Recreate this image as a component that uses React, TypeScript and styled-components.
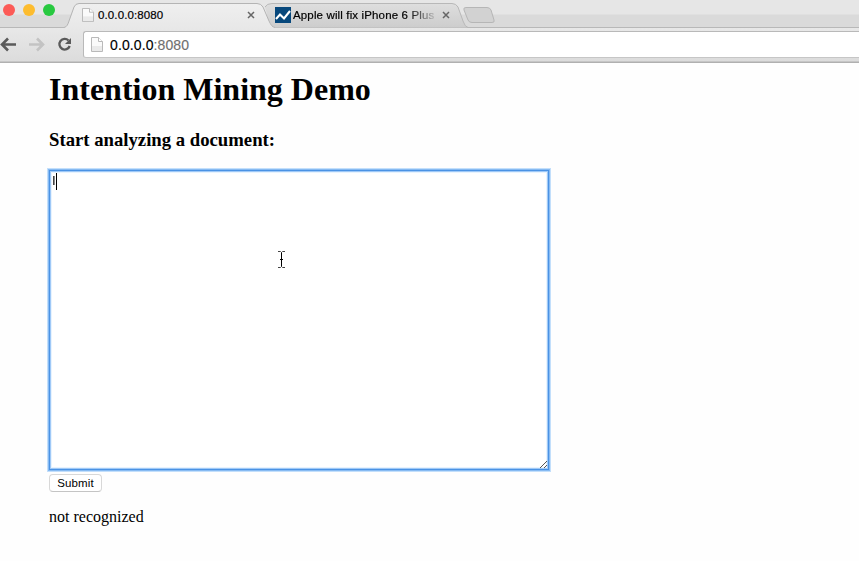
import React from "react";
import styled, { createGlobalStyle } from "styled-components";

const GlobalStyle = createGlobalStyle`
  * { box-sizing: border-box; }
  html, body { margin: 0; background: #fefefe; overflow: hidden; }
`;

const Browser = styled.div`
  width: 859px;
  height: 561px;
  display: flex;
  flex-direction: column;
  font-family: "Liberation Sans", Arial, sans-serif;
  color: #000;
`;

const TabStrip = styled.header`
  height: 28px;
  flex: none;
  display: flex;
  align-items: flex-end;
  background: linear-gradient(#e6e6e6 0 14px, #dadada 15px 27px, #b8b8b8 27px);
`;

const WindowButtons = styled.div`
  display: flex;
  gap: 8px;
  width: 64px;
  flex: none;
  padding-left: 3px;
  align-self: flex-start;
  padding-top: 4px;
`;

const WindowButton = styled.span<{ $color: string }>`
  width: 12px;
  height: 12px;
  border-radius: 50%;
  background: ${(p) => p.$color};
`;

const Tab = styled.div<{ $width: number; $front?: boolean; $overlap?: number }>`
  position: relative;
  z-index: ${(p) => (p.$front ? 2 : 1)};
  flex: none;
  width: ${(p) => p.$width}px;
  height: 26px;
  margin-left: ${(p) => -(p.$overlap ?? 0)}px;
`;

const TabShape = styled.svg`
  display: block;
  position: absolute;
  inset: 0;
`;

const TabContent = styled.div<{ $left: number; $gap: number }>`
  position: relative;
  display: flex;
  align-items: center;
  height: 26px;
  padding-left: ${(p) => p.$left}px;
  gap: ${(p) => p.$gap}px;
`;

const TabTitle = styled.span<{ $width: number; $fade?: boolean; $spacing: number }>`
  width: ${(p) => p.$width}px;
  overflow: hidden;
  white-space: nowrap;
  font-size: 11.5px;
  line-height: 16px;
  letter-spacing: ${(p) => p.$spacing}px;
  -webkit-text-stroke: 0.2px #000;
  ${(p) => p.$fade && "mask-image: linear-gradient(90deg, #000 78%, rgba(0,0,0,.1) 97%);"}
`;

const Icon = styled.svg`
  display: block;
  flex: none;
`;

const NewTab = styled.svg`
  display: block;
  flex: none;
  margin: 0 0 4px -6px;
  z-index: 1;
`;

const Toolbar = styled.div`
  height: 35px;
  flex: none;
  display: flex;
  align-items: flex-start;
  padding-top: 3px;
  background: linear-gradient(#e8e8e8, #dcdcdc 33px, #b0b0b0 34px);
`;

const NavButtons = styled.div`
  display: flex;
  align-items: center;
  width: 83px;
  height: 27px;
  gap: 12px;
  flex: none;
`;

const AddressBar = styled.div`
  flex: 1;
  height: 27px;
  display: flex;
  align-items: center;
  gap: 7px;
  padding-left: 7px;
  background: #fff;
  border: 1px solid #b9b9b9;
  border-right: 0;
  border-bottom-color: #c6c6c6;
  border-radius: 3px 0 0 3px;
`;

const Address = styled.span`
  font-size: 14px;
  line-height: 20px;
  letter-spacing: 0.1px;
  -webkit-text-stroke: 0.15px currentColor;
`;

const Port = styled.span`
  color: #707070;
`;

const Page = styled.main`
  flex: 1;
  padding: 8px 0 0 49px;
  font-family: "Liberation Serif", "Times New Roman", serif;
  background: #fefefe;
`;

const Title = styled.h1`
  margin: 0;
  font-size: 32px;
  line-height: 37px;
  height: 59px;
  white-space: nowrap;
`;

const Subtitle = styled.h3`
  margin: 0;
  font-size: 18.72px;
  line-height: 20px;
  height: 40px;
`;

const TextArea = styled.div`
  position: relative;
  width: 500px;
  height: 300px;
  padding: 4px 3px;
  background: #fff;
  border: 1px solid #4a92e4;
  box-shadow: 0 0 0 1px #86baf2, 0 0 0 2px #c3dffb, inset 0 0 0 1px #9fc9f7,
    inset 0 0 0 2px #e8f3fe;
  font: 13px/16px "Liberation Sans", Arial, sans-serif;
`;

const Entry = styled.div`
  display: flex;
  align-items: center;
  height: 16px;
  margin-top: -2px;
  will-change: transform;
`;

const Letter = styled.span`
  width: 4px;
  margin-left: -1px;
  color: #222;
  -webkit-text-stroke: 0.2px #222;
`;

const Caret = styled.span`
  width: 1px;
  height: 17px;
  background: #000;
`;

const Grip = styled.svg`
  position: absolute;
  right: 0;
  bottom: 0;
`;

const Pointer = styled.svg`
  position: absolute;
  left: 227px;
  top: 80px;
`;

const Submit = styled.button`
  display: block;
  width: 53px;
  height: 18px;
  margin: 4px 0 0;
  padding: 0;
  border: 1px solid #d8d8d8;
  border-bottom-color: #c4c4c4;
  border-radius: 4px;
  background: #fff;
  color: #000;
  font: 11.5px/15px "Liberation Sans", Arial, sans-serif;
  letter-spacing: 0.15px;
`;

const Result = styled.p`
  margin: 15px 0 0;
  font-size: 16px;
  line-height: 20px;
`;

const DocumentIcon = ({ height }: { height: number }) => (
  <Icon width="12" height={height} viewBox="0 0 12 15" preserveAspectRatio="none">
    <path d="M.5.5h7l4 4v10H.5z" fill="#fafafa" stroke="#b9b9b9" />
    <path d="M1 9h10v5H1z" fill="#eaeaea" />
    <path d="M7.5.5v4h4" fill="#fff" stroke="#b9b9b9" />
  </Icon>
);

const CloseIcon = () => (
  <Icon width="8" height="8" viewBox="0 0 8 8">
    <path d="M1 1l6 6M7 1L1 7" stroke="#666" strokeWidth="1.5" />
  </Icon>
);

export default function App() {
  return (
    <Browser>
      <GlobalStyle />
      <TabStrip>
        <WindowButtons>
          <WindowButton $color="#fc5b57" />
          <WindowButton $color="#fdbc2e" />
          <WindowButton $color="#28c940" />
        </WindowButtons>
        <Tab $width={212} $front>
          <TabShape width="212" height="26" viewBox="0 0 212 26">
            <defs>
              <linearGradient id="front" x2="0" y2="1">
                <stop stopColor="#efefef" />
                <stop offset="1" stopColor="#e8e8e8" />
              </linearGradient>
            </defs>
            <path
              d="M0 26V25.500C3 25 4 22 5 19L10 5Q11.500 1.500 15 1.500H193Q197 1.500 199 5L205 19C207 23 208 25 211 25.500V26Z"
              fill="url(#front)"
            />
            <path
              d="M0 25.500C3 25 4 22 5 19L10 5Q11.500 1.500 15 1.500H193Q197 1.500 199 5L205 19C207 23 208 25 211 25.500"
              fill="none"
              stroke="#b4b4b4"
            />
          </TabShape>
          <TabContent $left={18} $gap={4}>
            <DocumentIcon height={14} />
            <TabTitle $width={145} $spacing={0.12}>0.0.0.0:8080</TabTitle>
            <CloseIcon />
          </TabContent>
        </Tab>
        <Tab $width={205} $overlap={12}>
          <TabShape width="205" height="26" viewBox="0 0 205 26">
            <defs>
              <linearGradient id="back" x2="0" y2="1">
                <stop stopColor="#dedede" />
                <stop offset="1" stopColor="#cdcdcd" />
              </linearGradient>
            </defs>
            <path
              d="M1 5Q3 1.500 8 1.500H188Q192 1.500 194 5L199 19Q201 25 204 25.500H9L4 16Z"
              fill="url(#back)"
            />
            <path
              d="M1 5Q3 1.500 8 1.500H188Q192 1.500 194 5L199 19Q201 25 204 25.500"
              fill="none"
              stroke="#b8b8b8"
            />
          </TabShape>
          <TabContent $left={11} $gap={2}>
            <Icon width="16" height="16" viewBox="0 0 16 16">
              <path d="M0 0h16v16H0z" fill="#07487c" />
              <path d="M1 12L5 7.500L9 11.500L15 4" fill="none" stroke="#fff" strokeWidth="2.100" />
            </Icon>
            <TabTitle $width={147} $spacing={0.14} $fade>
              Apple will fix iPhone 6 Plus
            </TabTitle>
            <CloseIcon />
          </TabContent>
        </Tab>
        <NewTab width="33" height="17" viewBox="0 0 33 17">
          <path
            d="M3 .5H24Q27 .5 28 3L31 13Q32 15.500 29 15.500H9Q6 15.500 5 13L1 3Q0 .5 3 .5Z"
            fill="#d2d2d2"
            stroke="#b6b6b6"
          />
        </NewTab>
      </TabStrip>
      <Toolbar>
        <NavButtons>
          <Icon width="17" height="15" viewBox="0 0 17 15">
            <path d="M8 1.500L2 7.500L8 13.500M2 7.500H16" fill="none" stroke="#5a5a5a" strokeWidth="2.600" />
          </Icon>
          <Icon width="16" height="15" viewBox="0 0 16 15">
            <path d="M8 1.500L14 7.500L8 13.500M14 7.500H0" fill="none" stroke="#c3c3c3" strokeWidth="2.600" />
          </Icon>
          <Icon width="15" height="15" viewBox="0 0 15 15">
            <path d="M11.500 3.500A5.300 5.300 0 1 0 12.700 9" fill="none" stroke="#5a5a5a" strokeWidth="2.300" />
            <path d="M14 1v6H8z" fill="#5a5a5a" />
          </Icon>
        </NavButtons>
        <AddressBar>
          <DocumentIcon height={15} />
          <Address>
            0.0.0.0<Port>:8080</Port>
          </Address>
        </AddressBar>
      </Toolbar>
      <Page>
        <Title>Intention Mining Demo</Title>
        <Subtitle>Start analyzing a document:</Subtitle>
        <TextArea>
          <Entry>
            <Letter>I</Letter>
            <Caret />
          </Entry>
          <Pointer width="9" height="17" viewBox="0 0 9 17">
            <path d="M1 .5H3.500L4.500 1.500L5.500 .5H8M1 16.500H3.500L4.500 15.500L5.500 16.500H8" fill="none" stroke="#444" />
            <path d="M4.500 1.500v14M3 8.500h3" stroke="#000" />
          </Pointer>
          <Grip width="9" height="9" viewBox="0 0 9 9">
            <path d="M1 8L8 1M5 8L8 5" stroke="#555" strokeWidth="1" />
          </Grip>
        </TextArea>
        <Submit>Submit</Submit>
        <Result>not recognized</Result>
      </Page>
    </Browser>
  );
}
